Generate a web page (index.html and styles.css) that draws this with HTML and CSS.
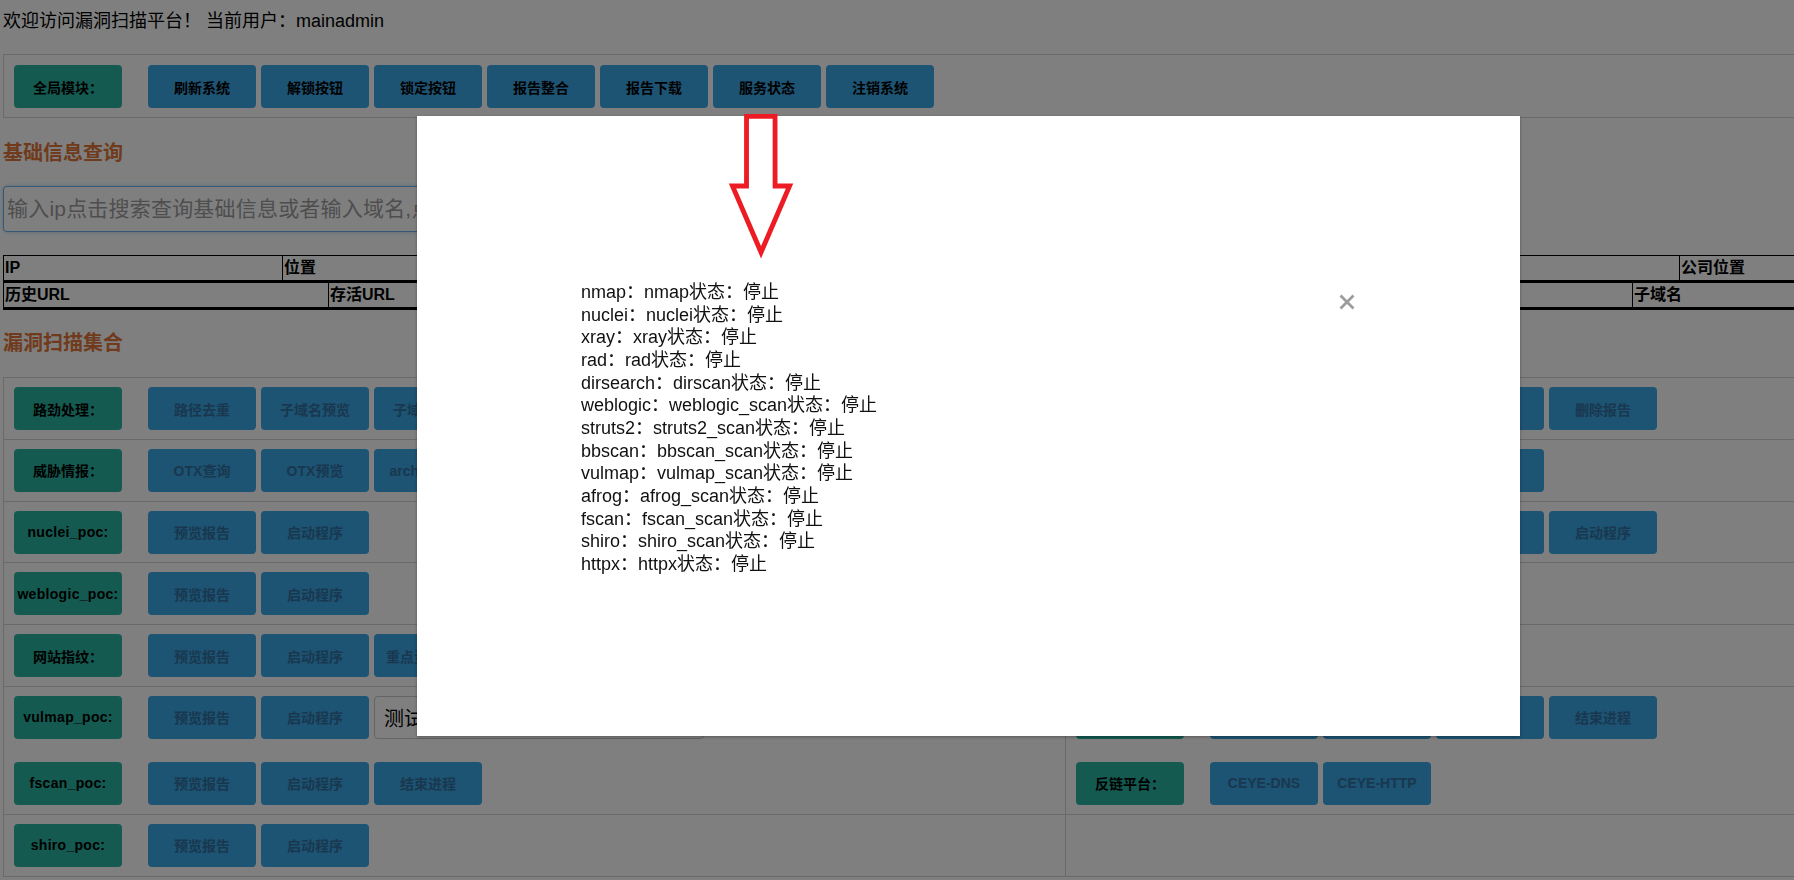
FILE: index.html
```html
<!DOCTYPE html>
<html lang="zh-CN">
<head>
<meta charset="utf-8">
<title>漏洞扫描平台</title>
<link rel="stylesheet" href="styles.css">
</head>
<body>
<div class="page">
  <div class="welcome">欢迎访问漏洞扫描平台！ 当前用户：mainadmin</div>

  <div class="global-box">
    <span class="label">全局模块：</span>
    <div class="btns">
      <button class="btn gbtn">刷新系统</button>
      <button class="btn gbtn">解锁按钮</button>
      <button class="btn gbtn">锁定按钮</button>
      <button class="btn gbtn">报告整合</button>
      <button class="btn gbtn">报告下载</button>
      <button class="btn gbtn">服务状态</button>
      <button class="btn gbtn">注销系统</button>
    </div>
  </div>

  <h3 class="section-title first">基础信息查询</h3>
  <div class="search-row">
    <input class="search-input" type="text" placeholder="输入ip点击搜索查询基础信息或者输入域名,点击搜索查询子域名">
  </div>

  <table class="info-table t1">
    <colgroup><col class="a1"><col class="a2"><col class="a3"><col class="a4"><col class="a5"></colgroup>
    <tr><th>IP</th><th>位置</th><th></th><th></th><th>公司位置</th></tr>
  </table>
  <table class="info-table t2">
    <colgroup><col class="b1"><col class="b2"><col class="b3"><col class="b4"><col class="b5"></colgroup>
    <tr><th>历史URL</th><th>存活URL</th><th></th><th></th><th>子域名</th></tr>
  </table>

  <h3 class="section-title second">漏洞扫描集合</h3>
  <div class="scan">
    <div class="cell l">
      <div class="line"><span class="label">路劲处理：</span><div class="btns">
        <button class="btn">路径去重</button><button class="btn">子域名预览</button><button class="btn">子域名扫描</button></div></div>
    </div>
    <div class="cell r">
      <div class="line"><span class="label en">xray_poc:</span><div class="btns">
        <button class="btn">预览报告</button><button class="btn">启动程序</button><button class="btn">结束进程</button><button class="btn">删除报告</button></div></div>
    </div>

    <div class="cell l">
      <div class="line"><span class="label">威胁情报：</span><div class="btns">
        <button class="btn">OTX查询</button><button class="btn">OTX预览</button><button class="btn">archive查询</button></div></div>
    </div>
    <div class="cell r">
      <div class="line"><span class="label">rad爬虫：</span><div class="btns">
        <button class="btn">预览报告</button><button class="btn">启动程序</button><button class="btn">结束进程</button></div></div>
    </div>

    <div class="cell l">
      <div class="line"><span class="label en">nuclei_poc:</span><div class="btns">
        <button class="btn">预览报告</button><button class="btn">启动程序</button></div></div>
    </div>
    <div class="cell r">
      <div class="line"><span class="label en">dirsearch:</span><div class="btns">
        <button class="btn">预览报告</button><button class="btn">结束进程</button><button class="btn">删除报告</button><button class="btn">启动程序</button></div></div>
    </div>

    <div class="cell l">
      <div class="line"><span class="label en">weblogic_poc:</span><div class="btns">
        <button class="btn">预览报告</button><button class="btn">启动程序</button></div></div>
    </div>
    <div class="cell r">
      <div class="line"><span class="label en">struts2:</span><div class="btns">
        <button class="btn">预览报告</button><button class="btn">启动程序</button></div></div>
    </div>

    <div class="cell l">
      <div class="line"><span class="label">网站指纹：</span><div class="btns">
        <button class="btn">预览报告</button><button class="btn">启动程序</button><button class="btn">重点资产识别</button></div></div>
    </div>
    <div class="cell r">
      <div class="line"><span class="label en">bbscan:</span><div class="btns">
        <button class="btn">预览报告</button><button class="btn">启动程序</button></div></div>
    </div>

    <div class="cell l">
      <div class="line"><span class="label en">vulmap_poc:</span><div class="btns">
        <button class="btn">预览报告</button><button class="btn">启动程序</button><input class="test-input" type="text" value="测试网站URL地址"></div></div>
      <div class="line"><span class="label en">fscan_poc:</span><div class="btns">
        <button class="btn">预览报告</button><button class="btn">启动程序</button><button class="btn">结束进程</button></div></div>
    </div>
    <div class="cell r">
      <div class="line"><span class="label en">afrog_poc:</span><div class="btns">
        <button class="btn">预览报告</button><button class="btn">启动程序</button><button class="btn">删除报告</button><button class="btn">结束进程</button></div></div>
      <div class="line"><span class="label">反链平台：</span><div class="btns">
        <button class="btn">CEYE-DNS</button><button class="btn">CEYE-HTTP</button></div></div>
    </div>

    <div class="cell l last">
      <div class="line"><span class="label en">shiro_poc:</span><div class="btns">
        <button class="btn">预览报告</button><button class="btn">启动程序</button></div></div>
    </div>
    <div class="cell r last"></div>
  </div>
</div>

<div class="mask"></div>

<div class="modal">
  <svg class="arrow" width="80" height="150" viewBox="305 -5 75 155" aria-hidden="true">
    <polygon points="326.5,0.5 356,0.5 356,72.5 371,72.5 341.5,141 312,72.5 326.5,72.5" fill="none" stroke="#ed1c24" stroke-width="5" stroke-linejoin="miter"/>
  </svg>
  <svg class="close" width="16" height="16" viewBox="0 0 16 16" aria-label="关闭">
    <path d="M1.5 1.5 L14.5 14.5 M14.5 1.5 L1.5 14.5" stroke="#9c9c9c" stroke-width="2.8" fill="none"/>
  </svg>
  <div class="status">
    <div>nmap：nmap状态：停止</div>
    <div>nuclei：nuclei状态：停止</div>
    <div>xray：xray状态：停止</div>
    <div>rad：rad状态：停止</div>
    <div>dirsearch：dirscan状态：停止</div>
    <div>weblogic：weblogic_scan状态：停止</div>
    <div>struts2：struts2_scan状态：停止</div>
    <div>bbscan：bbscan_scan状态：停止</div>
    <div>vulmap：vulmap_scan状态：停止</div>
    <div>afrog：afrog_scan状态：停止</div>
    <div>fscan：fscan_scan状态：停止</div>
    <div>shiro：shiro_scan状态：停止</div>
    <div>httpx：httpx状态：停止</div>
  </div>
</div>
</body>
</html>
```

FILE: styles.css
```css
* { box-sizing: border-box; }

html, body {
  margin: 0;
  padding: 0;
  background: #ffffff;
}

body {
  width: 1794px;
  height: 880px;
  overflow: hidden;
  position: relative;
  font-family: "Liberation Sans", "Noto Sans CJK SC", sans-serif;
  color: #000;
}

/* the page is a little wider than the window: right borders fall outside */
.page {
  width: 1800px;
  padding: 0 0 0 3px;
}

.welcome {
  padding-top: 9px;
  font-size: 18px;
  line-height: 24px;
  white-space: nowrap;
}

/* global module bar */
.global-box {
  margin-top: 21px;
  border: 1px solid #d4d4d4;
  padding: 10px 10px 9px;
  display: flex;
  align-items: center;
}

.label {
  flex: none;
  width: 108px;
  height: 43px;
  margin-right: 26px;
  border-radius: 4px;
  background: #28b4a0;
  display: flex;
  align-items: center;
  justify-content: center;
  font-weight: bold;
  font-size: 14px;
  white-space: nowrap;
  overflow: hidden;
}
.label.en { letter-spacing: 0.3px; }

.btns {
  display: flex;
  gap: 5px;
  align-items: center;
}

.btn {
  flex: none;
  width: 108px;
  height: 43px;
  padding: 0;
  border: none;
  border-radius: 4px;
  background: #3aa6e6;
  color: #32709e;
  font-family: "Liberation Sans", "Noto Sans CJK SC", sans-serif;
  font-weight: bold;
  font-size: 14px;
  white-space: nowrap;
  overflow: hidden;
}

.gbtn { color: #000; }

/* headings */
.section-title {
  margin: 0;
  font-size: 20px;
  line-height: 24px;
  font-weight: bold;
  color: #e0763a;
}
.section-title.first { margin-top: 23px; }
.section-title.second { margin-top: 21px; }

/* search */
.search-row {
  margin-top: 21px;
  display: flex;
}

.search-input {
  width: 1100px;
  height: 46px;
  border: 1px solid #66afe9;
  border-radius: 4px;
  box-shadow: 0 0 4px rgba(102, 175, 233, 0.5);
  padding: 0 3px;
  font-family: "Liberation Sans", "Noto Sans CJK SC", sans-serif;
  font-size: 21px;
  letter-spacing: 0.2px;
  outline: none;
}
.search-input::placeholder { color: #9c9c9c; }

/* info tables */
.info-table {
  width: 100%;
  border-collapse: separate;
  border-spacing: 0;
  table-layout: fixed;
  border-left: 1px solid #000;
}
.info-table.t1 {
  margin-top: 23px;
  border-top: 1px solid #000;
  border-bottom: 3px solid #000;
}
.info-table.t2 { border-bottom: 3px solid #000; }

.info-table th {
  height: 24px;
  padding: 0 1px;
  border-right: 1px solid #000;
  text-align: left;
  font-size: 16px;
  line-height: 24px;
  font-weight: bold;
  white-space: nowrap;
  overflow: hidden;
}

.a1 { width: 279px; }
.a2 { width: 420px; }
.a3 { width: 400px; }
.a4 { width: 577px; }
.a5 { width: 120px; }

.b1 { width: 325px; }
.b2 { width: 400px; }
.b3 { width: 450px; }
.b4 { width: 454px; }
.b5 { width: 167px; }

/* scan grid */
.scan {
  margin-top: 22px;
  border: 1px solid #d4d4d4;
  display: grid;
  grid-template-columns: 1062px 1fr;
}

.cell {
  padding: 9px 10px 8.75px;
  border-bottom: 1px solid #d4d4d4;
  display: flex;
  flex-direction: column;
  gap: 23px;
  min-height: 61.75px;
}
.cell.l { border-right: 1px solid #d4d4d4; }
.cell.last { border-bottom: none; }

.line {
  display: flex;
  align-items: center;
}

.test-input {
  width: 330px;
  height: 43px;
  border: 1px solid #c8c8c8;
  border-radius: 4px;
  padding: 0 9px;
  font-family: "Liberation Sans", "Noto Sans CJK SC", sans-serif;
  font-size: 20px;
  color: #000;
}

/* modal layer */
.mask {
  position: fixed;
  inset: 0;
  background: rgba(0, 0, 0, 0.5);
}

.modal {
  position: absolute;
  left: 417px;
  top: 116px;
  width: 1103px;
  height: 620px;
  background: #fff;
  box-shadow: 0 1px 3px rgba(0, 0, 0, 0.3);
}

.arrow {
  position: absolute;
  left: 305px;
  top: -5px;
  overflow: visible;
}

.close {
  position: absolute;
  left: 922px;
  top: 178px;
}

.status {
  padding: 165px 0 0 164px;
  font-size: 18px;
  line-height: 22.67px;
  color: #111;
  white-space: nowrap;
}
```
